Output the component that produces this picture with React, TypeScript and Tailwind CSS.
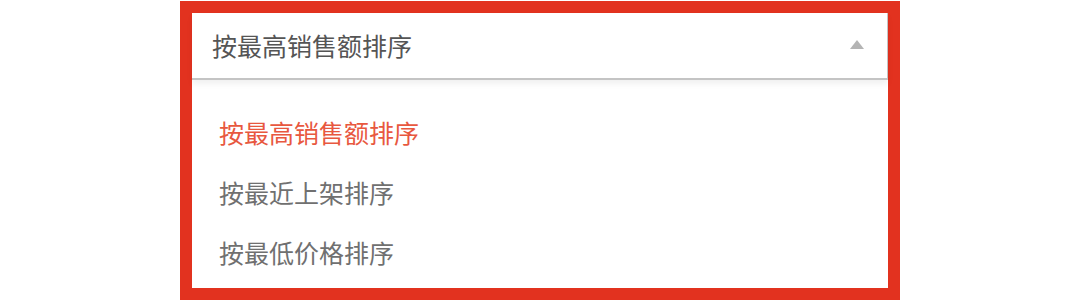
export default function App() {
  const options = ["按最高销售额排序", "按最近上架排序", "按最低价格排序"];
  const selected = 0;

  return (
    <div className="h-[302px] w-[1080px] bg-white pl-[180px] pt-px" style={{ fontFamily: '"Noto Sans CJK SC", "Noto Sans", sans-serif' }}>
      <div className="flex h-[299px] w-[720px] flex-col border-[12px] border-[#e2321f] bg-white">
        {/* Select header */}
        <div className="relative z-10 flex h-[67px] shrink-0 items-center justify-between border-b-2 border-r border-[#c4c4c4] bg-white pl-[20px] pr-[23px] shadow-[0_4px_6px_rgba(0,0,0,0.06)]">
          <span className="text-[25px] leading-none text-[#555555]">{options[selected]}</span>
          <svg width="14" height="9" viewBox="0 0 14 9" className="mt-[-2px]">
            <path d="M7 0 L14 9 L0 9 Z" fill="#b4b4b4" />
          </svg>
        </div>

        {/* Options */}
        <ul className="flex flex-col pt-[22px]">
          {options.map((label, i) => (
            <li
              key={label}
              className={`flex h-[60px] items-center pl-[27px] text-[25px] leading-none ${
                i === selected ? "text-[#e8583f]" : "text-[#707070]"
              }`}
            >
              {label}
            </li>
          ))}
        </ul>
      </div>
    </div>
  );
}
